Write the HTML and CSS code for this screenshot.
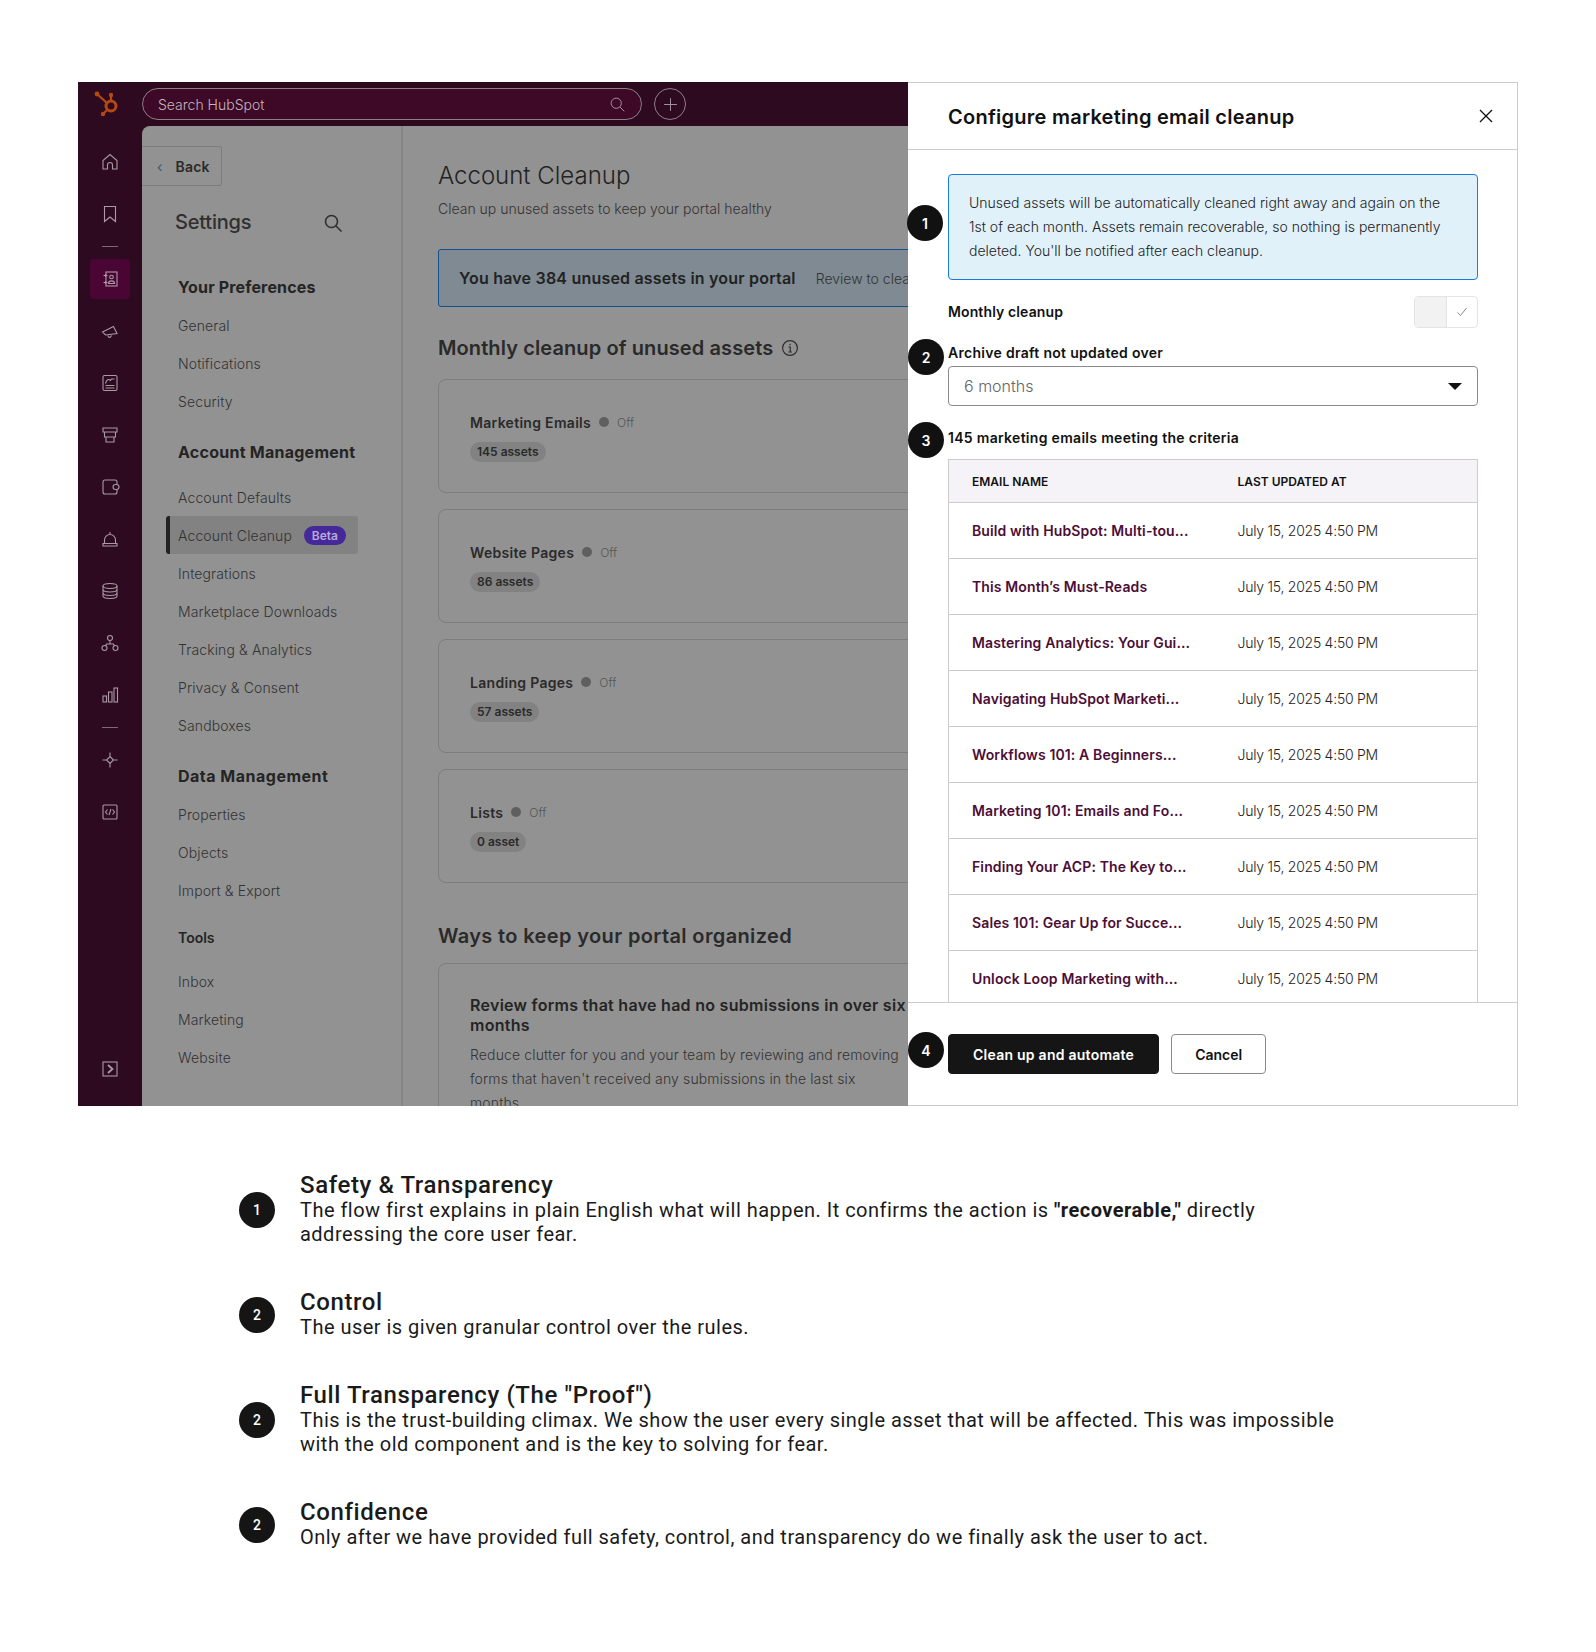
FILE: index.html
```html
<!DOCTYPE html>
<html lang="en">
<head>
    <meta charset="UTF-8">
    <meta name="viewport" content="width=device-width, initial-scale=1.0">
    <title>Configure marketing email cleanup</title>
    <link rel="stylesheet" href="styles.css">
</head>
<body>

<div class="shot">
    <div class="nav">
        <div class="logo">
            <svg width="30" height="30" viewBox="0 0 30 30" fill="none" stroke="#b5490f" stroke-width="2.2">
                <circle cx="21" cy="18" r="5" stroke-width="3"/>
                <circle cx="7" cy="6" r="2.4" fill="#b5490f" stroke="none"/>
                <circle cx="21" cy="7" r="2.2" fill="#b5490f" stroke="none"/>
                <circle cx="13" cy="26" r="2.2" fill="#b5490f" stroke="none"/>
                <path d="M7 6l10 9M21 7v7M13 26l5-5"/>
            </svg>
        </div>
        <div class="nav-slot"><svg class="ico" viewBox="0 0 20 20"><path d="M3 17V8.500L10 2.500l7 6V17h-4.500v-4a2.500 2.500 0 0 0-5 0v4z"/></svg></div>
        <div class="nav-slot"><svg class="ico" viewBox="0 0 20 20"><path d="M4.500 2.500h11v15L10 13l-5.500 4.500z"/></svg></div>
        <div class="nav-line"></div>
        <div class="nav-slot nav-active"><svg class="ico" viewBox="0 0 20 20"><rect x="6" y="3" width="11" height="14"/><path d="M3.500 6.500h4M5.500 5v3M3.500 13.500h4M5.500 12v3"/><circle cx="11.500" cy="8" r="1.800"/><path d="M8.500 14.500c0-3.500 6-3.500 6 0z"/></svg></div>
        <div class="nav-slot"><svg class="ico" viewBox="0 0 20 20"><path d="M2.500 11l11-5.500 3.500 7-11.500 1.500zM8 14.500c0 2.500 2.500 2.500 3.500 0"/></svg></div>
        <div class="nav-slot"><svg class="ico" viewBox="0 0 20 20"><rect x="3" y="2.500" width="14" height="15" rx="1.500"/><path d="M5.500 10.500c1-4 3-5 5-3l1-1.500h3M5.500 12.500h9M5.500 15h9"/></svg></div>
        <div class="nav-slot"><svg class="ico" viewBox="0 0 20 20"><path d="M3 3h14v4H3zM4.500 7v5h11V7M6 12v5h8v-5"/></svg></div>
        <div class="nav-slot"><svg class="ico" viewBox="0 0 20 20"><path d="M17 7.500V5a2 2 0 0 0-2-2H5a2 2 0 0 0-2 2v10a2 2 0 0 0 2 2h10a2 2 0 0 0 2-2v-2.500"/><rect x="13" y="7.500" width="6" height="5" rx="2.500"/></svg></div>
        <div class="nav-slot"><svg class="ico" viewBox="0 0 20 20"><path d="M4.500 14v-3a5.500 5.500 0 0 1 11 0v3M10 5.500V3M3 14.500h14v2.500H3z"/></svg></div>
        <div class="nav-slot"><svg class="ico" viewBox="0 0 20 20"><ellipse cx="10" cy="5" rx="7" ry="2.500"/><path d="M3 5v10c0 3.300 14 3.300 14 0V5M3 8.500c0 3.300 14 3.300 14 0M3 12c0 3.300 14 3.300 14 0"/></svg></div>
        <div class="nav-slot"><svg class="ico" viewBox="0 0 20 20"><circle cx="10" cy="5" r="2.500"/><circle cx="4.500" cy="15" r="2.500"/><circle cx="15.500" cy="15" r="2.500"/><path d="M10 7.500v3.500M5.500 13l1-2h7l1 2"/></svg></div>
        <div class="nav-slot"><svg class="ico" viewBox="0 0 20 20"><rect x="3" y="11" width="3.500" height="6"/><rect x="8.500" y="7" width="3.500" height="10"/><rect x="14" y="3" width="3.500" height="14"/></svg></div>
        <div class="nav-line"></div>
        <div class="nav-slot"><svg class="ico" viewBox="0 0 20 20"><path d="M10 2.500v4M10 13.500v4M2.500 10h4M13.500 10h4M10 6.500l3.500 3.500-3.500 3.500L6.500 10z"/></svg></div>
        <div class="nav-slot"><svg class="ico" viewBox="0 0 20 20"><rect x="3" y="3" width="14" height="14" rx="1"/><path d="M7.500 7.500L5.500 10l2 2.500M12.500 7.500l2 2.500-2 2.500M11 7l-2 6"/></svg></div>
        <div class="nav-slot nav-bottom"><svg class="ico" viewBox="0 0 20 20"><rect x="3" y="3" width="14" height="14"/><path d="M8 6l4.500 4L8 14" stroke-width="1.800"/></svg></div>
    </div>

    <div class="app">
        <div class="topbar">
            <div class="search">
                <span>Search HubSpot</span>
                <svg class="ico ico-small" viewBox="0 0 20 20"><circle cx="8.500" cy="8.500" r="6"/><path d="M13 13l5 5"/></svg>
            </div>
            <div class="plus"><svg class="ico ico-small" viewBox="0 0 20 20"><path d="M10 2.500v15M2.500 10h15"/></svg></div>
        </div>

        <div class="content">
            <div class="settings">
                <div class="back"><span class="back-arrow">‹</span> Back</div>
                <div class="settings-title">
                    <span>Settings</span>
                    <svg width="20" height="20" viewBox="0 0 20 20" fill="none" stroke="#2f2f2f" stroke-width="1.600"><circle cx="8.500" cy="8.500" r="6"/><path d="M13 13l5.500 5.500"/></svg>
                </div>

                <h3 class="side-head head-pref">Your Preferences</h3>
                <div class="side-item">General</div>
                <div class="side-item">Notifications</div>
                <div class="side-item">Security</div>

                <h3 class="side-head head-account">Account Management</h3>
                <div class="side-item">Account Defaults</div>
                <div class="side-item side-active">Account Cleanup <span class="beta">Beta</span></div>
                <div class="side-item">Integrations</div>
                <div class="side-item">Marketplace Downloads</div>
                <div class="side-item">Tracking &amp; Analytics</div>
                <div class="side-item">Privacy &amp; Consent</div>
                <div class="side-item">Sandboxes</div>

                <h3 class="side-head head-data">Data Management</h3>
                <div class="side-item">Properties</div>
                <div class="side-item">Objects</div>
                <div class="side-item">Import &amp; Export</div>

                <h3 class="side-head head-tools">Tools</h3>
                <div class="side-item">Inbox</div>
                <div class="side-item">Marketing</div>
                <div class="side-item">Website</div>
            </div>

            <div class="main">
                <h1>Account Cleanup</h1>
                <p class="sub">Clean up unused assets to keep your portal healthy</p>

                <div class="banner"><strong>You have 384 unused assets in your portal</strong><span>Review to clean up your portal</span></div>

                <h2 class="main-head">Monthly cleanup of unused assets
                    <svg width="18" height="18" viewBox="0 0 18 18" fill="none" stroke="#2f2f2f" stroke-width="1.200"><circle cx="9" cy="9" r="7.400"/><path d="M7.500 8h1.800v5M7.300 13h3.600M9 4.800v1.400"/></svg>
                </h2>

                <div class="card">
                    <div class="card-title"><strong>Marketing Emails</strong><i class="dot"></i><span>Off</span></div>
                    <span class="chip">145 assets</span>
                </div>
                <div class="card">
                    <div class="card-title"><strong>Website Pages</strong><i class="dot"></i><span>Off</span></div>
                    <span class="chip">86 assets</span>
                </div>
                <div class="card">
                    <div class="card-title"><strong>Landing Pages</strong><i class="dot"></i><span>Off</span></div>
                    <span class="chip">57 assets</span>
                </div>
                <div class="card">
                    <div class="card-title"><strong>Lists</strong><i class="dot"></i><span>Off</span></div>
                    <span class="chip">0 asset</span>
                </div>

                <h2 class="main-head head-ways">Ways to keep your portal organized</h2>

                <div class="card card-review">
                    <h4>Review forms that have had no submissions in over six months</h4>
                    <p>Reduce clutter for you and your team by reviewing and removing forms that haven't received any submissions in the last six months</p>
                </div>
            </div>
        </div>
    </div>

    <div class="panel">
        <div class="panel-head">
            <h2>Configure marketing email cleanup</h2>
            <svg width="16" height="16" viewBox="0 0 16 16" fill="none" stroke="#111" stroke-width="1.300"><path d="M2 2l12 12M14 2L2 14"/></svg>
        </div>

        <div class="panel-body">
            <div class="info">Unused assets will be automatically cleaned right away and again on the 1st of each month. Assets remain recoverable, so nothing is permanently deleted. You'll be notified after each cleanup.</div>

            <div class="toggle-row">
                <label>Monthly cleanup</label>
                <div class="toggle">
                    <div class="toggle-off"></div>
                    <div class="toggle-knob"><svg width="12" height="12" viewBox="0 0 12 12" fill="none" stroke="#8a8a8a" stroke-width="1"><path d="M1.500 6.500l3 3L10.500 2"/></svg></div>
                </div>
            </div>

            <label class="field-label">Archive draft not updated over</label>
            <div class="select"><span>6 months</span><i class="caret"></i></div>

            <label class="field-label count-label">145 marketing emails meeting the criteria</label>

            <table class="emails">
                <thead>
                    <tr><th class="col-name">Email name</th><th>Last updated at</th></tr>
                </thead>
                <tbody>
                    <tr><td>Build with HubSpot: Multi-tou...</td><td>July 15, 2025 4:50 PM</td></tr>
                    <tr><td>This Month’s Must-Reads</td><td>July 15, 2025 4:50 PM</td></tr>
                    <tr><td>Mastering Analytics: Your Gui...</td><td>July 15, 2025 4:50 PM</td></tr>
                    <tr><td>Navigating HubSpot Marketi...</td><td>July 15, 2025 4:50 PM</td></tr>
                    <tr><td>Workflows 101: A Beginners...</td><td>July 15, 2025 4:50 PM</td></tr>
                    <tr><td>Marketing 101: Emails and Fo...</td><td>July 15, 2025 4:50 PM</td></tr>
                    <tr><td>Finding Your ACP: The Key to...</td><td>July 15, 2025 4:50 PM</td></tr>
                    <tr><td>Sales 101: Gear Up for Succe...</td><td>July 15, 2025 4:50 PM</td></tr>
                    <tr><td>Unlock Loop Marketing with...</td><td>July 15, 2025 4:50 PM</td></tr>
                </tbody>
            </table>
        </div>

        <div class="panel-foot">
            <button class="btn btn-dark">Clean up and automate</button>
            <button class="btn btn-cancel">Cancel</button>
        </div>

        <span class="badge badge-a">1</span>
        <span class="badge badge-b">2</span>
        <span class="badge badge-c">3</span>
        <span class="badge badge-d">4</span>
    </div>
</div>

<div class="notes">
    <div class="note">
        <span class="note-num">1</span>
        <div class="note-text">
            <h3>Safety &amp; Transparency</h3>
            <p>The flow first explains in plain English what will happen. It confirms the action is <b>"recoverable,"</b> directly addressing the core user fear.</p>
        </div>
    </div>
    <div class="note">
        <span class="note-num">2</span>
        <div class="note-text">
            <h3>Control</h3>
            <p>The user is given granular control over the rules.</p>
        </div>
    </div>
    <div class="note">
        <span class="note-num">2</span>
        <div class="note-text">
            <h3>Full Transparency (The "Proof")</h3>
            <p>This is the trust-building climax. We show the user every single asset that will be affected. This was impossible with the old component and is the key to solving for fear.</p>
        </div>
    </div>
    <div class="note">
        <span class="note-num">2</span>
        <div class="note-text">
            <h3>Confidence</h3>
            <p>Only after we have provided full safety, control, and transparency do we finally ask the user to act.</p>
        </div>
    </div>
</div>

</body>
</html>
```

FILE: styles.css
```css
/* General */
* {
    box-sizing: border-box;
    margin: 0;
    padding: 0;
}

body {
    width: 1596px;
    height: 1652px;
    background: #fff;
    overflow: hidden;
    font-family: Inter, "Noto Sans", sans-serif;
    color: #111;
}

.shot {
    display: flex;
    width: 1440px;
    height: 1024px;
    margin: 82px 0 0 78px;
}

/* Left nav */
.nav {
    display: flex;
    flex-direction: column;
    align-items: center;
    flex: 0 0 64px;
    padding-bottom: 11px;
    background: #2d0a20;
}

.logo {
    display: flex;
    justify-content: center;
    width: 100%;
    height: 54px;
    padding: 6px 10px 0 0;
}

.nav-slot {
    position: relative;
    display: flex;
    align-items: center;
    justify-content: center;
    width: 40px;
    height: 52px;
}

.nav-active::before {
    content: "";
    position: absolute;
    inset: 6px 0;
    border-radius: 4px;
    background: #4a0535;
}

.nav-bottom {
    margin-top: auto;
}

.nav-line {
    width: 16px;
    height: 1px;
    margin: 6px 0;
    background: #7d6a76;
}

.ico {
    position: relative;
    width: 20px;
    height: 20px;
    fill: none;
    stroke: #a99aa4;
    stroke-width: 1.100;
}

.ico-small {
    width: 17px;
    height: 17px;
}

/* App area */
.app {
    display: flex;
    flex-direction: column;
    flex: 0 0 766px;
    background: #2d0a20;
    overflow: hidden;
}

.topbar {
    display: flex;
    gap: 12px;
    flex: 0 0 44px;
    padding-top: 6px;
}

.search {
    display: flex;
    align-items: center;
    justify-content: space-between;
    width: 500px;
    height: 32px;
    padding: 0 15px;
    border: 1px solid #8d7e88;
    border-radius: 16px;
    background: #3e0827;
    font-size: 14px;
    font-weight: 300;
    color: #c2b6be;
}

.plus {
    display: flex;
    align-items: center;
    justify-content: center;
    width: 32px;
    height: 32px;
    border: 1px solid #8d7e88;
    border-radius: 50%;
}

.content {
    display: flex;
    flex: 1;
    min-height: 0;
    border-top-left-radius: 8px;
    background: #929292;
    color: #333;
}

/* Settings column */
.settings {
    flex: 0 0 261px;
    padding: 20px 0 0 36px;
    border-right: 2px solid #858585;
}

.back {
    display: flex;
    align-items: center;
    gap: 13px;
    width: 80px;
    height: 40px;
    margin-left: -36px;
    padding-left: 15px;
    border: 1px solid #7d7d7d;
    border-left: none;
    border-radius: 0 3px 3px 0;
    font-size: 14px;
    font-weight: 600;
    letter-spacing: .2px;
    color: #2a2a2a;
}

.back-arrow {
    color: #3f5568;
    font-weight: 400;
}

.settings-title {
    display: flex;
    align-items: center;
    justify-content: space-between;
    width: 168px;
    height: 30px;
    margin: 21px 0 -1px -3px;
    font-size: 20px;
    font-weight: 500;
    letter-spacing: -.2px;
    color: #2f2f2f;
}

.settings-title svg {
    margin-top: 2px;
}

.side-head {
    height: 24px;
    font-size: 16px;
    line-height: 24px;
    font-weight: 700;
    letter-spacing: .25px;
    color: #242424;
}

.head-pref { margin: 39px 0 7px; letter-spacing: .15px; }
.head-account { margin: 20px 0 14px; }
.head-data { margin: 20px 0 7px; letter-spacing: .5px; }
.head-tools { margin: 17px 0 12px; font-size: 14px; font-weight: 600; letter-spacing: 0; }

.side-item {
    display: flex;
    align-items: center;
    height: 38px;
    font-size: 14px;
    font-weight: 300;
    letter-spacing: .12px;
    color: #333;
}

.side-active {
    justify-content: space-between;
    width: 192px;
    margin-left: -12px;
    padding: 0 12px 0 8px;
    border-left: 4px solid #222;
    border-radius: 3px;
    background: #828282;
}

.beta {
    padding: 2px 8px;
    border-radius: 10px;
    background: #45289a;
    font-size: 12px;
    font-weight: 600;
    letter-spacing: 0;
    color: #b8aadb;
}

/* Main column */
.main {
    flex: 1;
    min-width: 0;
    padding: 32px 0 0 35px;
    overflow: hidden;
}

.main h1 {
    height: 36px;
    font-size: 24px;
    line-height: 36px;
    font-weight: 300;
    color: #222;
}

.sub {
    margin-top: 5px;
    font-size: 14px;
    line-height: 20px;
    font-weight: 300;
}

.banner {
    display: flex;
    align-items: center;
    gap: 20px;
    width: 600px;
    height: 58px;
    margin-top: 30px;
    padding-left: 20px;
    border: 1px solid #14508f;
    border-radius: 3px;
    background: #7f8a92;
    font-size: 14px;
    font-weight: 300;
    white-space: nowrap;
}

.banner strong {
    font-size: 16px;
    font-weight: 600;
    letter-spacing: .2px;
    color: #222;
}

.main-head {
    display: flex;
    align-items: center;
    gap: 8px;
    height: 28px;
    margin: 27px 0 17px;
    font-size: 20px;
    font-weight: 600;
    letter-spacing: .1px;
    color: #2a2a2a;
    white-space: nowrap;
}

.head-ways {
    margin: 39px 0 13px;
    letter-spacing: .37px;
}

.card {
    width: 504px;
    height: 114px;
    margin-bottom: 16px;
    padding: 32px 0 0 31px;
    border: 1px solid #7d7d7d;
    border-radius: 8px;
}

.card-title {
    display: flex;
    align-items: center;
    height: 20px;
    font-size: 12px;
    font-weight: 300;
    color: #555;
}

.card-title strong {
    font-size: 14px;
    font-weight: 600;
    letter-spacing: .3px;
    color: #2a2a2a;
}

.dot {
    width: 10px;
    height: 10px;
    margin: 0 8px;
    border-radius: 50%;
    background: #5f5f5f;
}

.chip {
    display: inline-block;
    margin-top: 10px;
    padding: 0 7px;
    border-radius: 10px;
    background: #828282;
    font-size: 12px;
    line-height: 20px;
    font-weight: 600;
    color: #2a2a2a;
}

.card-review {
    height: 200px;
    padding-top: 31px;
}

.card-review h4 {
    width: 440px;
    font-size: 16px;
    line-height: 20px;
    font-weight: 600;
    letter-spacing: .28px;
    color: #242424;
}

.card-review p {
    width: 432px;
    margin-top: 8px;
    font-size: 14px;
    line-height: 24px;
    font-weight: 300;
    letter-spacing: .13px;
}

/* Side panel */
.panel {
    position: relative;
    display: flex;
    flex-direction: column;
    flex: 1;
    min-width: 0;
    border: 1px solid #ccc;
    border-left: none;
    background: #fff;
}

.panel-head {
    display: flex;
    align-items: center;
    justify-content: space-between;
    flex: 0 0 67px;
    padding: 2px 23px 0 40px;
    border-bottom: 1px solid #ccc;
}

.panel-head h2 {
    font-size: 20px;
    font-weight: 600;
    letter-spacing: .25px;
}

.panel-head svg {
    margin-top: -2px;
}

.panel-body {
    flex: 1;
    min-height: 0;
    padding: 24px 39px 0 40px;
    overflow: hidden;
}

.info {
    height: 106px;
    padding: 16px 20px;
    border: 1px solid #1a7ae0;
    border-radius: 4px;
    background: #e1f1fa;
    font-size: 14px;
    line-height: 24px;
    font-weight: 300;
    color: #222;
}

.toggle-row {
    display: flex;
    align-items: center;
    justify-content: space-between;
    margin-top: 16px;
}

.toggle-row label,
.field-label {
    display: block;
    font-size: 14px;
    line-height: 20px;
    font-weight: 600;
    letter-spacing: .3px;
}

.toggle-row label {
    letter-spacing: .12px;
}

.toggle {
    display: flex;
    width: 64px;
    height: 32px;
    border: 1px solid #e4e4e4;
    border-radius: 4px;
}

.toggle-off {
    flex: 1;
    background: #f2f2f2;
}

.toggle-knob {
    display: flex;
    align-items: center;
    justify-content: center;
    width: 31px;
    border-left: 1px solid #e4e4e4;
}

.field-label {
    margin-top: 15px;
}

.select {
    display: flex;
    align-items: center;
    justify-content: space-between;
    height: 40px;
    margin-top: 3px;
    padding: 0 15px 0 15px;
    border: 1px solid #8a8a8a;
    border-radius: 4px;
    font-size: 16px;
    font-weight: 300;
    color: #666;
}

.caret {
    border-top: 7px solid #111;
    border-left: 7px solid transparent;
    border-right: 7px solid transparent;
}

.count-label {
    margin: 22px 0 11px;
}

.emails {
    width: 100%;
    table-layout: fixed;
    border-collapse: collapse;
    border: 1px solid #ccc;
}

.emails th {
    height: 43px;
    padding-left: 24px;
    background: #f5f3f8;
    border-bottom: 1px solid #ccc;
    font-size: 12px;
    font-weight: 600;
    text-align: left;
    text-transform: uppercase;
}

.emails .col-name {
    width: 265px;
    padding-left: 23px;
}

.emails td {
    height: 56px;
    padding-left: 24px;
    border-bottom: 1px solid #ccc;
    font-size: 14px;
    font-weight: 300;
    letter-spacing: -.25px;
    white-space: nowrap;
    color: #222;
}

.emails td:first-child {
    padding-left: 23px;
    font-weight: 600;
    letter-spacing: .12px;
    color: #4c0e36;
}

.panel-foot {
    display: flex;
    gap: 12px;
    flex: 0 0 103px;
    padding: 31px 0 0 40px;
    border-top: 1px solid #ccc;
}

.btn {
    height: 40px;
    padding: 0 24px;
    border: 1px solid #8a8a8a;
    border-radius: 4px;
    background: #fff;
    font-family: inherit;
    font-size: 14px;
    font-weight: 600;
    letter-spacing: .25px;
    color: #111;
}

.btn-dark {
    border-color: #151515;
    background: #151515;
    color: #fff;
}

.btn-cancel {
    padding: 0 23px;
    letter-spacing: 0;
}

/* Numbered markers sitting on the panel edge */
.badge {
    position: absolute;
    display: flex;
    align-items: center;
    justify-content: center;
    width: 36px;
    height: 36px;
    border-radius: 50%;
    background: #111;
    font-size: 14px;
    font-weight: 600;
    color: #fff;
}

.badge-a { left: -1px; top: 122px; }
.badge-b { left: 0; top: 256px; }
.badge-c { left: 0; top: 339px; }
.badge-d { left: 0; top: 949px; }

/* Notes under the screenshot */
.notes {
    display: flex;
    flex-direction: column;
    gap: 44px;
    margin: 67px 0 0 239px;
    font-family: Roboto, sans-serif;
    color: #1a1a1a;
}

.note {
    display: flex;
    align-items: center;
    gap: 25px;
}

.note-num {
    display: flex;
    align-items: center;
    justify-content: center;
    flex: 0 0 36px;
    height: 36px;
    border-radius: 50%;
    background: #151515;
    font-size: 14px;
    font-weight: 500;
    color: #fff;
}

.note-text {
    width: 1042px;
}

.note-text h3 {
    font-size: 24px;
    line-height: 24px;
    font-weight: 500;
    letter-spacing: .6px;
}

.note-text p {
    margin-top: 1px;
    font-size: 20px;
    line-height: 24px;
    letter-spacing: .48px;
}
```
